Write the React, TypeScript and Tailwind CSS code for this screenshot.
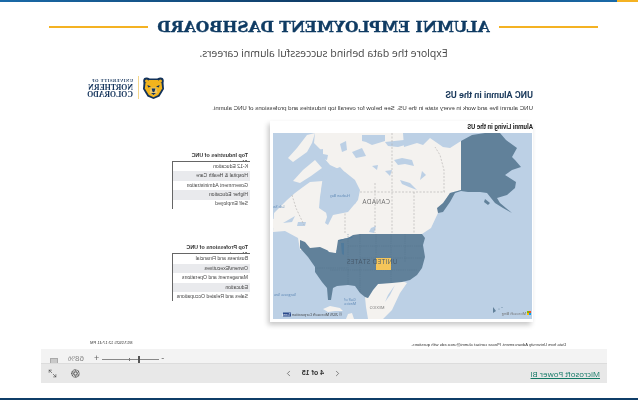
import React from 'react';
import { Aperture, ChevronLeft, ChevronRight, Maximize2 } from 'lucide-react';

const industries = ['K-12 Education', 'Hospital & Health Care', 'Government Administration', 'Higher Education', 'Self Employed'];
const professions = ['Business and Financial', 'Owners/Executives', 'Management and Operations', 'Education', 'Sales and Related Occupations'];

const TopList: React.FC<{ title: string; rows: string[] }> = ({ title, rows }) => (
  <div className="w-[78px]">
    <div className="h-[11px] pt-[2px] overflow-hidden text-[5.4px] leading-[7px] font-bold text-[#333]">
      <div className="pl-[2px] w-[70px]">{title}</div>
    </div>
    <div className="border-t border-r border-[#666]">
      {rows.map((row, i) => (
        <div
          key={row}
          className={`h-[9.4px] pl-[2px] flex items-center whitespace-nowrap text-[5.1px] text-[#444] ${i % 2 ? 'bg-[#e9eaed]' : 'bg-white'}`}
        >
          {row}
        </div>
      ))}
    </div>
  </div>
);

const BearLogo = () => (
  <svg width="21" height="22" viewBox="0 0 21 22">
    <circle cx="3.6" cy="4" r="3.4" fill="#12325a" />
    <circle cx="17.4" cy="4" r="3.4" fill="#12325a" />
    <path d="M0.5 6 L5 1.5 L16 1.5 L20.5 6 L21 12 L16.5 19.5 L10.5 22 L4.5 19.5 L0 12 Z" fill="#12325a" />
    <circle cx="3.6" cy="4" r="1.6" fill="#f2b41d" />
    <circle cx="17.4" cy="4" r="1.6" fill="#f2b41d" />
    <path d="M2.5 6 L6 3 L15 3 L18.5 6 L19.2 11.5 L15.2 18 L10.5 20.2 L5.8 18 L1.8 11.5 Z" fill="#f2b41d" />
    <path d="M8 10.5 L13 10.5 L14.5 15.5 L10.5 18.5 L6.5 15.5 Z" fill="#e9c56a" />
    <path d="M8.6 11.5 L12.4 11.5 L11.6 14.6 L10.5 15.2 L9.4 14.6 Z" fill="#12325a" />
    <path d="M8 16 L13 16 L10.5 18 Z" fill="#12325a" />
    <path d="M4.4 8 L8 9.6 L5.2 10.4 Z" fill="#12325a" />
    <path d="M16.6 8 L13 9.6 L15.8 10.4 Z" fill="#12325a" />
  </svg>
);

// paths below are in reference screen coordinates, the group flips them into the map box
const UsaMap = () => (
  <svg width="259" height="186" viewBox="0 0 259 186" className="block blur-[0.3px]">
    <rect width="259" height="186" fill="#bcd0e5" />
    <g transform="translate(532 -133) scale(-1 1)">
      {/* land */}
      <path
        fill="#f4f2ef"
        d="M461 190 L461 141 L450 148 L443 147 L430 138 L423 145 L417 143 L404 147 L403 133 L315 133 L314 143 L321 150 L324 158 L330 165 L345 172 L355 180 L360 190 L358 200 L348 212 L333 215 L328 225 L325 223 L328 214 L319 208 L320 197 L323 181 L310 182 L303 187 L295 193 L287 200 L274 213 L273 232 L285 231 L298 238 L300 250 L420 250 L422 234 L431 228 L438 213 L450 193 Z"
      />
      <path fill="#f4f2ef" d="M288 158 L297 148 L307 135 L315 133 L312 143 L307 152 L293 162 Z" />
      <path fill="#f4f2ef" d="M293 181 L303 170 L315 160 L322 168 L311 176 L300 183 Z" />
      <path fill="#f4f2ef" d="M273 219 L285 216 L284 226 L273 228 Z" />
      <path
        fill="#f4f2ef"
        d="M365 297 L366 307 L368 319 L383 319 L392 310 L400 293 L407 283 L402 281 L378 284 L373 290 L368 298 Z"
      />
      <path fill="#f4f2ef" d="M323 309 L330 306 L340 308 L343 311 L335 311 L328 312 Z" />
      <path fill="#f4f2ef" d="M346 319 L348 314 L352 313 L354 319 Z" />
      {/* water on the land */}
      <g fill="#bcd0e5">
        <path d="M362 135 L385 135 L385 141 L372 145 L366 142 L362 141 Z" />
        <path d="M385 142 L404 140 L405 145 L398 147 L388 146 Z" />
        <path d="M316 150 L323 149 L323 154 L328 155 L327 160 L320 158 Z" />
        <path d="M402 158 L412 160 L414 166 L405 164 L398 165 L394 160 Z" />
        <path d="M400 180 L410 183 L417 190 L409 187 L402 184 Z" />
        <path d="M335 188 L328 172 L340 167 L350 178 L358 192 L356 203 L345 211 L333 213 L328 222 L326 212 L320 207 L321 190 L323 176 Z" />
        <path d="M298 222 L306 222 L305 226 L297 226 Z" />
        <path d="M283 223 L295 216 L292 222 Z" />
        <path d="M352 152 L362 148 L366 156 L356 158 Z" />
        <path d="M371 228 L376 226 L374 233 L369 232 Z" />
        <path d="M385 171 L392 170 L390 176 Z" />
        <path d="M422 171 L426 175 L420 180 Z" />
        <path d="M395 285 L390 295 L385 302 L388 295 Z" />
        <path d="M340 144 L346 141 L347 150 L342 152 Z" />
        <path d="M372 166 L378 165 L377 170 Z" />
      </g>
      <g stroke="#b0adab" strokeWidth="0.6" strokeDasharray="2 1.5" fill="none">
        <path d="M392 133 L392 233" />
        <path d="M375 183 L375 233" />
        <path d="M414 192 L414 233" />
        <path d="M360 192 L445 192" />
        <path d="M444 192 L444 170 L440 155 L435 147" />
        <path d="M292 195 L296 208 L304 225" />
        <path d="M345 233 L345 212" />
      </g>
      {/* alaska */}
      <path
        fill="#61819a"
        d="M461 141 L472 135 L485 133 L500 133 L506 140 L517 148 L512 157 L515 160 L521 167 L512 170 L505 175 L516 182 L515 188 L507 195 L497 198 L500 203 L512 213 L503 208 L495 203 L487 193 L480 192 L468 192 L461 191 L455 193 L450 202 L443 212 L438 213 L437 208 L443 203 L450 193 L461 190 Z"
      />
      <path fill="#61819a" d="M485 199 L490 203 L488 205 L484 202 Z" />
      <path fill="#61819a" d="M493 307 L496 311 L493 313 Z" />
      <circle cx="499" cy="309" r="0.5" fill="#61819a" />
      <circle cx="502" cy="307.5" r="0.5" fill="#61819a" />
      {/* lower 48 */}
      <path
        fill="#61819a"
        d="M422 234 L425 238 L423 245 L425 257 L422 268 L417 275 L410 280 L402 282 L392 283 L378 284 L373 290 L368 298 L365 297 L360 293 L355 286 L348 285 L337 286 L333 288 L331 300 L328 300 L327 288 L322 282 L315 272 L315 267 L308 257 L300 248 L300 240 L305 242 L310 248 L320 247 L329 251 L336 253 L338 240 L348 238 L353 235 L360 234 Z"
      />
      <path fill="#f4f2ef" d="M325 247 L333 243 L336 247 L336 253 L329 252 Z" />
      <path fill="#4f7a9c" d="M341 243 L344 243 L344 255 L342 254 Z" />
      <path fill="#4f7a9c" d="M339 240 L353 236.5 L352 238 L345 239 L340 241 Z" />
      <g stroke="#54748c" strokeWidth="0.5" strokeDasharray="1.2 1" fill="none">
        <path d="M376 234 L376 270 M391 234 L391 283 M405 234 L405 262 M360 234 L360 292 M348 234 L348 285" />
        <path d="M348 246 L423 246 M360 258 L422 258 M330 270 L417 270 M315 268 L348 268" />
      </g>
      <rect x="376" y="258" width="15" height="12" fill="#f5c55a" />
    </g>
    {/* labels */}
    <g fontFamily="'Open Sans', sans-serif">
      <text x="156" y="71" fill="#6f6f6f" fontSize="6.5" textAnchor="middle" letterSpacing="0.3">CANADA</text>
      <text x="160" y="130.5" fill="#47596a" fontSize="6.5" textAnchor="middle" letterSpacing="0.3">UNITED STATES</text>
      <text x="155" y="176" fill="#777" fontSize="4" textAnchor="middle">MEXICO</text>
      <text x="192" y="64" fill="#5b86b4" fontSize="3.6" textAnchor="middle">Hudson Bay</text>
      <text x="182" y="168" fill="#5b86b4" fontSize="3.6" textAnchor="middle">Gulf of</text>
      <text x="182" y="172" fill="#5b86b4" fontSize="3.6" textAnchor="middle">Mexico</text>
      <text x="247" y="163" fill="#5b86b4" fontSize="3.6" textAnchor="middle">Sargasso Sea</text>
      <text x="254" y="75" fill="#5b86b4" fontSize="3.6" textAnchor="middle">Lab Sea</text>
      <text x="190" y="182.5" fill="#333" fontSize="3.6">© 2025 Microsoft Corporation</text>
      <rect x="241" y="179.5" width="8" height="4" fill="#2a4a8c" />
      <text x="241.5" y="182.5" fill="#fff" fontSize="3">Terms</text>
      <text x="6" y="182" fill="#6b6b6b" fontSize="3.6">Microsoft Bing</text>
    </g>
    <g>
      <rect x="1" y="178" width="2" height="2" fill="#f25022" />
      <rect x="3" y="178" width="2" height="2" fill="#7fba00" />
      <rect x="1" y="180" width="2" height="2" fill="#00a4ef" />
      <rect x="3" y="180" width="2" height="2" fill="#ffb900" />
    </g>
  </svg>
);

export default function App() {
  return (
    <div className="w-[638px] h-[400px] bg-white overflow-hidden flex flex-col -scale-x-100 font-['Liberation_Sans',sans-serif]">
      {/* Top stripe */}
      <div className="h-[2px] flex shrink-0">
        <div className="w-[21px] bg-[#f4b223]" />
        <div className="flex-1 bg-gradient-to-r from-[#1a6aa8] via-[#0f3d68] to-[#1a6aa8]" />
      </div>

      {/* Header */}
      <header className="h-[70px] shrink-0 flex flex-col items-center pr-[9px]">
        <div className="mt-[15px] h-[20px] flex items-center gap-[9px]">
          <div className="w-[99px] h-[2px] bg-[#f4b223]" />
          <h1 className="font-['DejaVu_Serif',serif] font-bold text-[15.5px] text-[#0f3b63] whitespace-nowrap [-webkit-text-stroke:0.35px_#0f3b63]">
            ALUMNI EMPLOYMENT DASHBOARD
          </h1>
          <div className="w-[99px] h-[2px] bg-[#f4b223]" />
        </div>
        <p className="mt-[9px] font-['Open_Sans',sans-serif] text-[10.5px] text-[#444]">
          Explore the data behind successful alumni careers.
        </p>
      </header>

      {/* Report */}
      <div className="ml-[31px] w-[566px] flex-1 flex flex-col">
        <div className="flex-1 flex pl-[74px]">
          <div className="w-[263px] pt-[17px]">
            <h2 className="font-['Roboto',sans-serif] font-bold text-[9px] leading-[12px] text-[#1b3a5c]">UNC Alumni in the US</h2>
            <p className="mt-[1px] h-[19px] text-[6.1px] leading-[12px] whitespace-nowrap text-[#333]">
              UNC alumni live and work in every state in the US. See below for overall top industries and professions of UNC alumni.
            </p>
            <div className="w-[263px] h-[201px] bg-white pl-[1px] shadow-[2px_3px_5px_rgba(0,0,0,0.22)]">
              <div className="h-[12px] -ml-[1px] text-[6.3px] leading-[12px] font-bold text-[#222] font-['Roboto',sans-serif]">
                Alumni Living in the US
              </div>
              <UsaMap />
            </div>
          </div>
          <div className="ml-[20px] pt-[4px] flex flex-col">
            <div className="ml-[86px] w-[80px] h-[23px] flex items-center">
              <BearLogo />
              <div className="ml-[4px] w-px h-[23px] bg-[#f3d68c]" />
              <div className="ml-[5px] font-['Liberation_Serif',serif] text-[#12325a] leading-[7px] whitespace-nowrap">
                <div className="text-[4.4px] font-bold tracking-[0.55px]">UNIVERSITY OF</div>
                <div className="text-[7.8px] font-bold">NORTHERN</div>
                <div className="text-[7.8px] font-bold">COLORADO</div>
              </div>
            </div>
            <div className="mt-[51px]">
              <TopList title="Top Industries of UNC Alumni" rows={industries} />
            </div>
            <div className="mt-[33.5px]">
              <TopList title="Top Professions of UNC Alumni" rows={professions} />
            </div>
          </div>
        </div>
        <div className="h-[11px] shrink-0 flex pt-[4px] pl-[41px] text-[4.1px] leading-[5px] text-[#333]">
          <span className="whitespace-nowrap">Data from University Advancement. Please contact alumni@unco.edu with questions.</span>
          <span className="ml-auto mr-[49px] -mt-[2px] whitespace-nowrap">8/17/2025 12:17:41 PM</span>
        </div>

        {/* Zoom strip */}
        <div className="h-[14px] shrink-0 bg-[#f3f3f3] flex items-end justify-end pr-[9px] text-[#666] overflow-hidden">
          <span className="text-[9px] leading-[9px]">-</span>
          <div className="relative w-[57px] h-[7px] flex items-center ml-[2px] mr-[3px]">
            <div className="w-full h-px bg-[#888]" />
            <div className="absolute left-[29px] top-[2px] w-px h-[3px] bg-[#777]" />
            <div className="absolute left-[19px] top-0 w-[2px] h-[7px] bg-[#555]" />
          </div>
          <span className="text-[9px] leading-[9px]">+</span>
          <span className="ml-[10px] text-[8px] leading-[9px] text-[#888]">68%</span>
          <div className="ml-[10px] -mb-[3px] w-[8px] h-[8px] bg-[#c9c9c9] border border-[#aaa]" />
        </div>

        {/* Bottom bar */}
        <div className="h-[20px] shrink-0 bg-[#e8e8e8] border-t border-[#dcdcdc] flex items-center pl-[7px] pr-[7px] text-[#333]">
          <a className="w-[69px] font-['Open_Sans',sans-serif] text-[7.9px] leading-[10px] text-[#117865] underline whitespace-nowrap">Microsoft Power BI</a>
          <div className="ml-[188.5px] flex items-center">
            <ChevronLeft size={9} strokeWidth={1.5} />
            <span className="ml-[9.5px] w-[26px] text-[7px] font-bold whitespace-nowrap">4 of 15</span>
            <ChevronRight size={9} strokeWidth={1.5} className="ml-[4.5px]" />
          </div>
          <div className="ml-auto flex items-center gap-[14px]">
            <Aperture size={9} strokeWidth={1.5} />
            <Maximize2 size={9} strokeWidth={1.5} />
          </div>
        </div>
      </div>

      <div className="h-[15px] shrink-0" />
      <div className="h-[2px] shrink-0 bg-[#0f3d68]" />
    </div>
  );
}
